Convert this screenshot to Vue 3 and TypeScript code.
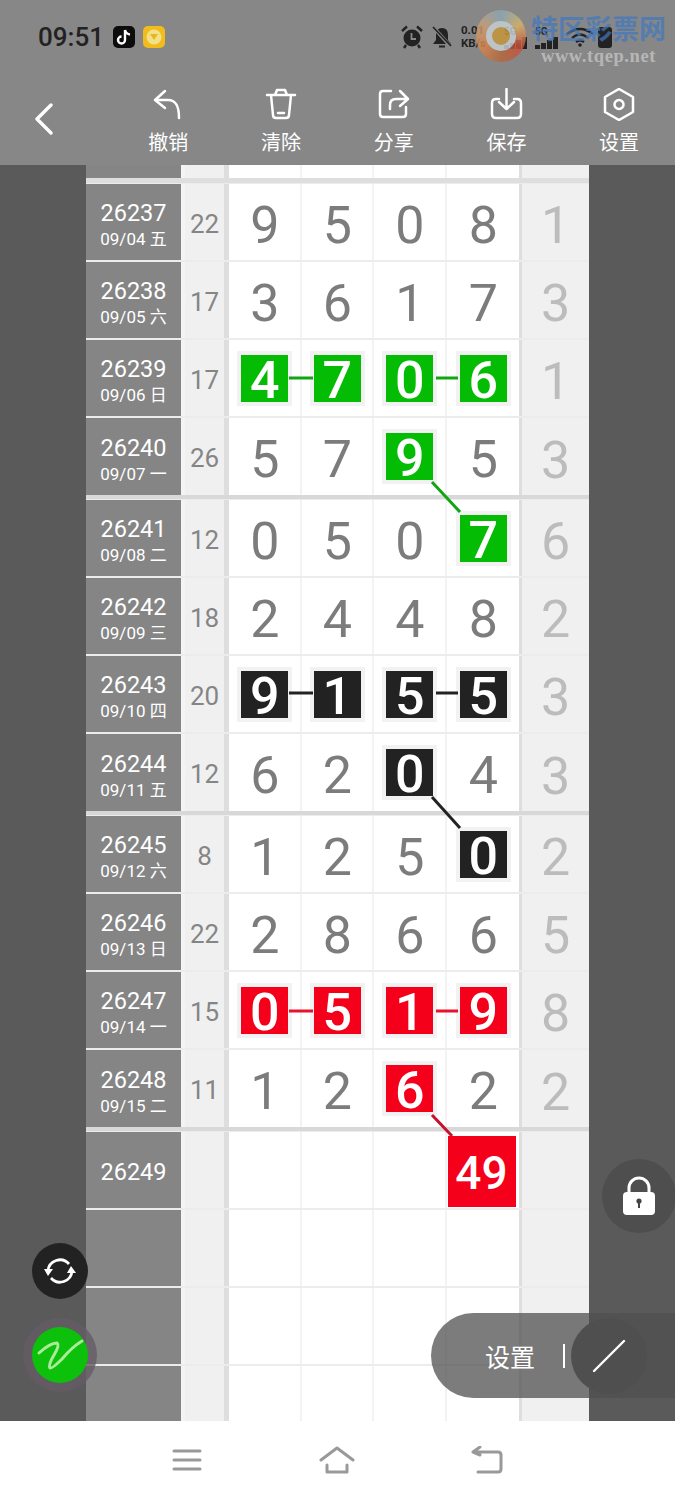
<script setup lang="ts">
type Tone = 'green' | 'black' | 'red'

interface Row {
  no: string
  date: string
  sum: string
  digits: string[]
  tail: string
  marks?: number[]
  tone?: Tone
  groupEnd?: boolean
}

const rows: Row[] = [
  { no: '26237', date: '09/04 五', sum: '22', digits: ['9', '5', '0', '8'], tail: '1' },
  { no: '26238', date: '09/05 六', sum: '17', digits: ['3', '6', '1', '7'], tail: '3' },
  { no: '26239', date: '09/06 日', sum: '17', digits: ['4', '7', '0', '6'], tail: '1', marks: [0, 1, 2, 3], tone: 'green' },
  { no: '26240', date: '09/07 一', sum: '26', digits: ['5', '7', '9', '5'], tail: '3', marks: [2], tone: 'green', groupEnd: true },
  { no: '26241', date: '09/08 二', sum: '12', digits: ['0', '5', '0', '7'], tail: '6', marks: [3], tone: 'green' },
  { no: '26242', date: '09/09 三', sum: '18', digits: ['2', '4', '4', '8'], tail: '2' },
  { no: '26243', date: '09/10 四', sum: '20', digits: ['9', '1', '5', '5'], tail: '3', marks: [0, 1, 2, 3], tone: 'black' },
  { no: '26244', date: '09/11 五', sum: '12', digits: ['6', '2', '0', '4'], tail: '3', marks: [2], tone: 'black', groupEnd: true },
  { no: '26245', date: '09/12 六', sum: '8', digits: ['1', '2', '5', '0'], tail: '2', marks: [3], tone: 'black' },
  { no: '26246', date: '09/13 日', sum: '22', digits: ['2', '8', '6', '6'], tail: '5' },
  { no: '26247', date: '09/14 一', sum: '15', digits: ['0', '5', '1', '9'], tail: '8', marks: [0, 1, 2, 3], tone: 'red' },
  { no: '26248', date: '09/15 二', sum: '11', digits: ['1', '2', '6', '2'], tail: '2', marks: [2], tone: 'red', groupEnd: true },
]

const tools = [
  { label: '撤销', d: 'M13 3 L3 12 L13 20 M3 12 H16 C24 12 27 18 27 30' },
  { label: '清除', d: 'M2 7 H30 M10 7 L12 2 H20 L22 7 M6 7 L8 27 Q8 30 11 30 H21 Q24 30 24 27 L26 7 M13 25 H19' },
  { label: '分享', d: 'M14 3 H6 Q3 3 3 6 V26 Q3 29 6 29 H26 Q29 29 29 26 V19 M13 21 V17 Q13 11 19 11 H30 M23 3 L31 11 L23 18' },
  { label: '保存', d: 'M9 11 H6 Q2 11 2 15 V26 Q2 30 6 30 H27 Q31 30 31 26 V15 Q31 11 27 11 H24 M16.500 1 V20 M9 14 L16.500 21 L24 14' },
  { label: '设置', d: 'M16 1 L30 9 V24 L16 32 L2 24 V9 Z M16 12 A4.500 4.500 0 1 0 16 21 A4.500 4.500 0 1 0 16 12 Z' },
]

const links = [
  { x1: 203, y1: 213, x2: 227, y2: 213, c: '#12a512' },
  { x1: 350, y1: 213, x2: 372, y2: 213, c: '#12a512' },
  { x1: 346, y1: 317, x2: 374, y2: 347, c: '#12a512' },
  { x1: 203, y1: 528, x2: 227, y2: 528, c: '#222' },
  { x1: 350, y1: 528, x2: 372, y2: 528, c: '#222' },
  { x1: 346, y1: 632, x2: 374, y2: 663, c: '#222' },
  { x1: 203, y1: 846, x2: 227, y2: 846, c: '#e8122c' },
  { x1: 350, y1: 846, x2: 372, y2: 846, c: '#e8122c' },
  { x1: 346, y1: 950, x2: 366, y2: 971, c: '#c4122c' },
]
</script>

<template>
  <div class="page">
    <header class="top">
      <div class="status">
        <span class="time">09:51</span>
        <span class="app tiktok">
          <svg viewBox="0 0 22 22" width="22" height="22">
            <path d="M12 4 V14 A3.500 3.500 0 1 1 8.500 10.500 M12 4 Q13 8 17 8.500" fill="none" stroke="#fff" stroke-width="2.400" />
          </svg>
        </span>
        <span class="app yellow">
          <svg viewBox="0 0 22 22" width="22" height="22">
            <circle cx="11" cy="11" r="7.500" fill="#f3e08a" />
            <path d="M7 8 H15 L11 14 Z" fill="#e8b818" />
          </svg>
        </span>
        <div class="sys">
          <svg viewBox="0 0 22 24" width="22" height="24">
            <circle cx="11" cy="13" r="8.500" fill="#222" />
            <path d="M10.500 8 V14 H15" fill="none" stroke="#888" stroke-width="1.800" />
            <path d="M1 6 L6 1.500 M21 6 L16 1.500 M5 20 L3 23 M17 20 L19 23" stroke="#222" stroke-width="2.400" />
          </svg>
          <svg viewBox="0 0 22 22" width="22" height="22">
            <path d="M2 18 L5 14 V9 Q5 2 11 2 Q17 2 17 9 V14 L20 18 Z M8 19.500 H14 V21.500 H8 Z" fill="#222" />
            <path d="M3 2 L20 21" stroke="#888" stroke-width="3.400" />
            <path d="M2 1 L20 20" stroke="#222" stroke-width="1.600" />
          </svg>
          <span class="speed">0.01<br />KB/s</span>
          <span class="net">5G<i class="signal"><b></b><b></b><b></b><b></b></i></span>
          <span class="net">5G<i class="signal"><b></b><b></b><b></b><b></b></i></span>
          <svg class="wifi" viewBox="0 0 28 20" width="28" height="20">
            <path d="M1 7 Q14 -3 27 7 M6 11 Q14 4 22 11 M10 15 Q14 12 18 15" fill="none" stroke="#222" stroke-width="2.200" />
            <circle cx="14" cy="18" r="1.800" fill="#222" />
          </svg>
          <span class="battery"></span>
        </div>
      </div>

      <div class="watermark" aria-hidden="true">
        <span class="logo"><i></i></span>
        <div class="mark-text">
          <span class="mark-title">特区彩票网</span>
          <span class="mark-url">www.tqep.net</span>
        </div>
      </div>

      <div class="toolbar">
        <button class="back" aria-label="返回">
          <svg viewBox="0 0 20 32" width="20" height="32">
            <path d="M17 2 L3 16 L17 30" fill="none" stroke="#fff" stroke-width="3.400" stroke-linecap="round" stroke-linejoin="round" />
          </svg>
        </button>
        <div class="tools">
          <div v-for="t in tools" :key="t.label" class="tool">
            <svg viewBox="0 0 33 33" width="33" height="33">
              <path :d="t.d" fill="none" stroke="#fff" stroke-width="2.500" stroke-linecap="round" stroke-linejoin="round" />
            </svg>
            <span>{{ t.label }}</span>
          </div>
        </div>
      </div>
    </header>

    <main class="stage">
      <div class="table">
        <div class="row partial">
          <div class="no"></div><div class="gap"></div><div class="sum"></div><div class="bar"></div>
          <div class="digits"><div v-for="n in 4" :key="n" class="cell"></div></div>
          <div class="bar"></div><div class="tail"></div>
        </div>

        <div v-for="r in rows" :key="r.no" class="row" :class="{ 'group-end': r.groupEnd }">
          <div class="no">
            <strong>{{ r.no }}</strong>
            <small>{{ r.date }}</small>
          </div>
          <div class="gap"></div>
          <div class="sum">{{ r.sum }}</div>
          <div class="bar"></div>
          <div class="digits">
            <div v-for="(d, i) in r.digits" :key="i" class="cell">
              <span v-if="r.marks?.includes(i)" class="hit" :class="r.tone">{{ d }}</span>
              <span v-else class="plain">{{ d }}</span>
            </div>
          </div>
          <div class="bar"></div>
          <div class="tail">{{ r.tail }}</div>
        </div>

        <div class="row">
          <div class="no"><strong>26249</strong></div><div class="gap"></div><div class="sum"></div><div class="bar"></div>
          <div class="digits">
            <div class="cell"></div><div class="cell"></div><div class="cell"></div>
            <div class="cell"><span class="total">49</span></div>
          </div>
          <div class="bar"></div><div class="tail"></div>
        </div>

        <div v-for="n in 3" :key="n" class="row">
          <div class="no"></div><div class="gap"></div><div class="sum"></div><div class="bar"></div>
          <div class="digits"><div v-for="m in 4" :key="m" class="cell"></div></div>
          <div class="bar"></div><div class="tail"></div>
        </div>

        <svg class="links" viewBox="0 0 503 1256" width="503" height="1256">
          <line v-for="(l, i) in links" :key="i" :x1="l.x1" :y1="l.y1" :x2="l.x2" :y2="l.y2" :stroke="l.c" stroke-width="3" />
        </svg>
      </div>

      <button class="lock" aria-label="锁定">
        <svg viewBox="0 0 34 40" width="34" height="40">
          <path d="M7 18 V12 A10 10 0 0 1 27 12 V18" fill="none" stroke="#fff" stroke-width="3" />
          <rect x="1" y="16" width="32" height="23" rx="4" fill="#fff" />
          <circle cx="17" cy="25" r="2.600" fill="#444" />
          <rect x="16" y="26" width="2" height="6" fill="#444" />
        </svg>
      </button>

      <button class="refresh" aria-label="刷新">
        <svg viewBox="0 0 32 32" width="32" height="32">
          <path d="M4 16 A12 12 0 0 1 25 9 M28 16 A12 12 0 0 1 7 23" fill="none" stroke="#fff" stroke-width="2.800" />
          <path d="M0 14 H9 L4 21 Z M23 18 H32 L27 11 Z" fill="#fff" />
        </svg>
      </button>

      <button class="pen" aria-label="画笔">
        <svg viewBox="0 0 56 56" width="56" height="56">
          <path d="M7 26 Q18 16 25 16 Q28 18 22 28 Q16 38 18 41 Q20 42 30 32 Q40 20 50 14" fill="none" stroke="#a8eb98" stroke-width="3" stroke-linecap="round" />
        </svg>
      </button>

      <div class="pill">
        <span class="pill-label">设置</span>
        <i class="pill-sep"></i>
        <span class="pill-round">
          <svg viewBox="0 0 34 34" width="34" height="34">
            <path d="M2 32 L32 2" stroke="#fff" stroke-width="2.400" stroke-linecap="round" />
          </svg>
        </span>
      </div>
    </main>

    <nav class="nav">
      <svg viewBox="0 0 30 24" width="30" height="24">
        <path d="M2 3 H28 M2 12 H28 M2 21 H28" stroke="#999" stroke-width="3" stroke-linecap="round" />
      </svg>
      <svg viewBox="0 0 36 28" width="36" height="28">
        <path d="M2 14 L18 2 L34 14 M8 19 V26 H28 V19" fill="none" stroke="#999" stroke-width="3" stroke-linecap="round" stroke-linejoin="round" />
      </svg>
      <svg viewBox="0 0 32 28" width="32" height="28">
        <path d="M9 1 L2 6 L9 9 M3 6 H27 Q30 6 30 9 V23 Q30 26 27 26 H7" fill="none" stroke="#999" stroke-width="3" stroke-linecap="round" stroke-linejoin="round" />
      </svg>
    </nav>
  </div>
</template>

<style>
html, body {
  margin: 0;
  background: #fff;
}
</style>

<style scoped>
.page {
  width: 675px;
  height: 1500px;
  display: flex;
  flex-direction: column;
  overflow: hidden;
  font-family: Roboto, "Noto Sans CJK SC", sans-serif;
}
.top {
  height: 165px;
  flex: none;
  position: relative;
  background: #878787;
  color: #fff;
  display: flex;
  flex-direction: column;
}
.status {
  height: 76px;
  display: flex;
  align-items: center;
  padding: 0 63px 2px 38px;
  box-sizing: border-box;
  gap: 8px;
}
.time {
  font-size: 26px;
  font-weight: 500;
  color: #222;
  margin-right: 1px;
}
.app {
  width: 22px;
  height: 22px;
  border-radius: 5px;
  display: block;
}
.app svg { display: block; }
.tiktok { background: #0c0c0c; }
.yellow { background: #f2bd1c; }
.sys {
  margin-left: auto;
  display: flex;
  align-items: center;
  gap: 8px;
}
.speed {
  width: 28px;
  font-size: 11.500px;
  line-height: 13px;
  font-weight: 700;
  color: #222;
  margin-right: 7px;
  white-space: nowrap;
}
.net {
  font-size: 10px;
  font-weight: 700;
  color: #222;
  display: flex;
  flex-direction: column;
  line-height: 11px;
}
.signal {
  display: flex;
  gap: 1px;
  align-items: flex-end;
  height: 12px;
}
.signal b {
  width: 5px;
  background: #222;
}
.signal b:nth-child(1) { height: 4px; }
.signal b:nth-child(2) { height: 6px; }
.signal b:nth-child(3) { height: 9px; }
.signal b:nth-child(4) { height: 12px; }
.wifi { margin-right: -4px; }
.battery {
  width: 14px;
  height: 21px;
  border-radius: 3px;
  background: #222;
}
.watermark {
  position: absolute;
  left: 476px;
  top: 10px;
  display: flex;
  gap: 5px;
  pointer-events: none;
}
.logo {
  width: 50px;
  height: 52px;
  border-radius: 50%;
  background: conic-gradient(#8aa8b8, #d8b468, #c8503c, #b4683c, #d8864c, #c8a078, #8aa8b8);
  opacity: 0.82;
  display: flex;
  align-items: center;
  justify-content: center;
}
.logo i {
  width: 18px;
  height: 18px;
  border-radius: 50%;
  border: 6px solid #c8d2d8;
  background: #c89838;
}
.mark-text {
  display: flex;
  flex-direction: column;
  align-items: center;
  margin-top: 4px;
}
.mark-title {
  font-size: 27px;
  line-height: 32px;
  font-weight: 700;
  color: rgba(66, 120, 190, 0.72);
  white-space: nowrap;
}
.mark-url {
  font-family: "Liberation Serif", serif;
  font-size: 18.500px;
  line-height: 20px;
  font-weight: 700;
  letter-spacing: 0.6px;
  color: rgba(225, 225, 225, 0.55);
  white-space: nowrap;
}
.toolbar {
  flex: 1;
  display: flex;
}
.back {
  width: 112px;
  flex: none;
  border: 0;
  padding: 0 0 0 34px;
  background: none;
  text-align: left;
}
.tools {
  flex: 1;
  display: flex;
}
.tool {
  width: 112.700px;
  display: flex;
  flex-direction: column;
  align-items: center;
  padding-top: 12px;
  font-size: 20px;
  line-height: 28px;
  gap: 8px;
}
.stage {
  flex: 1;
  position: relative;
  background: #5a5a5a;
  display: flex;
  justify-content: center;
  overflow: hidden;
}
.table {
  width: 503px;
  position: relative;
  background: #fff;
  overflow: hidden;
}
.row {
  display: grid;
  grid-template-columns: 95px 4px 39px 5px 290px 3px 67px;
  height: 78px;
  box-sizing: border-box;
  border-top: 1px solid #ececec;
  border-bottom: 1px solid #ececec;
}
.row.partial {
  height: 18px;
  border-top: 0;
  border-bottom-width: 5px;
  border-bottom-color: #dedede;
}
.row.group-end {
  height: 82px;
  border-bottom-width: 4px;
  border-bottom-color: #d8d8d8;
}
.no {
  background: #858585;
  color: #fff;
  display: flex;
  flex-direction: column;
  align-items: center;
  justify-content: center;
  padding-top: 5px;
  box-sizing: border-box;
}
.no strong {
  font-size: 23.500px;
  line-height: 29px;
  font-weight: 400;
}
.no small {
  font-size: 17px;
  line-height: 22px;
}
.gap { background: #f4f4f4; }
.sum {
  background: #f0f0f0;
  color: #858585;
  font-size: 26px;
  display: flex;
  align-items: center;
  justify-content: center;
  padding-top: 3px;
}
.bar { background: #dedede; }
.digits {
  display: grid;
  grid-template-columns: repeat(4, 1fr);
}
.cell {
  display: flex;
  align-items: center;
  justify-content: center;
  position: relative;
  font-size: 52px;
  color: #7c7c7c;
  border-right: 2px solid #f3f3f3;
  padding-left: 1px;
}
.cell:last-child { border-right: 0; }
.plain {
  display: block;
  padding-top: 6px;
}
.hit {
  width: 47px;
  height: 47px;
  flex: none;
  box-sizing: border-box;
  padding-top: 4px;
  display: flex;
  align-items: center;
  justify-content: center;
  font-weight: 500;
  font-size: 52px;
  line-height: 43px;
  color: #fff;
  box-shadow: 0 0 0 4px #f2f2f2;
}
.hit.green { background: #04bc04; }
.hit.black { background: #222; }
.hit.red { background: #f4001a; }
.total {
  position: absolute;
  left: 1px;
  top: 4px;
  width: 68px;
  height: 71px;
  box-sizing: border-box;
  padding-top: 3px;
  background: #f4001a;
  color: #fff;
  font-size: 46px;
  font-weight: 500;
  display: flex;
  align-items: center;
  justify-content: center;
}
.tail {
  background: #f0f0f0;
  color: #bcbcbc;
  font-size: 52px;
  display: flex;
  align-items: center;
  justify-content: center;
  padding-top: 7px;
}
.links {
  position: absolute;
  left: 0;
  top: 0;
  pointer-events: none;
}
.lock {
  position: absolute;
  left: 602px;
  top: 994px;
  width: 74px;
  height: 74px;
  padding: 0;
  border: 0;
  border-radius: 50%;
  background: #4e4e4e;
  display: flex;
  align-items: center;
  justify-content: center;
}
.refresh {
  position: absolute;
  left: 32px;
  top: 1078px;
  width: 56px;
  height: 56px;
  padding: 0;
  border: 0;
  border-radius: 50%;
  background: #222;
  display: flex;
  align-items: center;
  justify-content: center;
}
.pen {
  position: absolute;
  left: 32px;
  top: 1162px;
  width: 56px;
  height: 56px;
  padding: 0;
  border: 0;
  border-radius: 50%;
  background: #0cc00c;
  box-shadow: 0 0 0 9px rgba(100, 92, 100, 0.8);
}
.pen svg { display: block; }
.pill {
  position: absolute;
  left: 431px;
  top: 1148px;
  width: 290px;
  height: 85px;
  border-radius: 43px;
  background: rgba(80, 80, 80, 0.75);
  display: flex;
  align-items: center;
  color: #fff;
}
.pill-label {
  margin-left: 54px;
  font-size: 25px;
}
.pill-sep {
  width: 2px;
  height: 24px;
  background: #fff;
  margin-left: 28px;
}
.pill-round {
  width: 76px;
  height: 76px;
  border-radius: 50%;
  background: #4f4f4f;
  margin-left: 6px;
  display: flex;
  align-items: center;
  justify-content: center;
}
.nav {
  height: 79px;
  flex: none;
  background: #fff;
  display: flex;
  align-items: center;
  padding: 0 172px 2px 172px;
  box-sizing: border-box;
  justify-content: space-between;
}
</style>
